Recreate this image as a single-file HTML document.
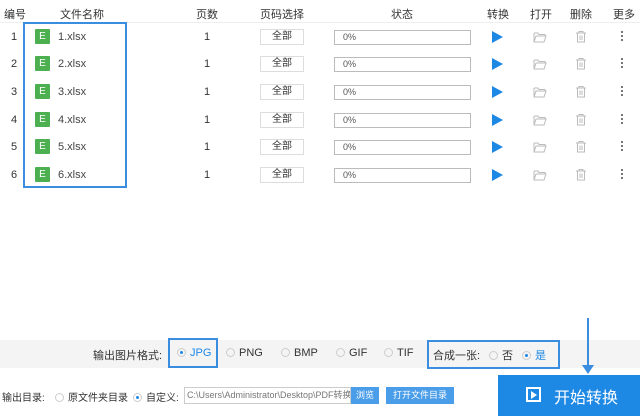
<!DOCTYPE html><html><head><meta charset="utf-8"><style>
*{margin:0;padding:0;box-sizing:border-box}
body{width:640px;height:420px;background:#fff;font-family:"Liberation Sans","Noto Sans CJK SC",sans-serif;font-size:11px;color:#333;position:relative;overflow:hidden}
.a{position:absolute;white-space:nowrap}
.h{top:6px;font-size:11px;color:#333}
.c{transform:translateX(-50%)}
.e{width:15px;height:15px;background:#4caf50;color:#fff;font-size:10px;text-align:center;line-height:15px;border-radius:1px}
.btn{width:44px;height:16px;border:1px solid #ddd;text-align:center;line-height:14px;font-size:10px;background:#fff}
.bar{width:137px;height:15px;border:1px solid #bbb;font-size:9px;padding-left:8px;line-height:13px;color:#555}
.play{width:0;height:0;border-left:11px solid #1e88e5;border-top:6px solid transparent;border-bottom:6px solid transparent}
.r{width:9px;height:9px;border:1px solid #ccc;border-radius:50%;display:inline-block;vertical-align:-1px;margin-right:4px;position:relative}
.r.on::after{content:"";position:absolute;left:2px;top:2px;width:3px;height:3px;border-radius:50%;background:#1e88e5}
</style></head><body>
<div class="a h c" style="left:15px">编号</div>
<div class="a h c" style="left:82px">文件名称</div>
<div class="a h c" style="left:207px">页数</div>
<div class="a h c" style="left:282px">页码选择</div>
<div class="a h c" style="left:402px">状态</div>
<div class="a h c" style="left:498px">转换</div>
<div class="a h c" style="left:541px">打开</div>
<div class="a h c" style="left:581px">删除</div>
<div class="a h c" style="left:624px">更多</div>
<div class="a" style="left:0;top:22px;width:640px;height:1px;background:#eee"></div>
<div id="rows"></div>
<script>
var ys=[37,64,92,120,147,175],h='';
ys.forEach(function(y,i){var n=i+1;
h+='<div class="a" style="left:11px;top:'+(y-6)+'px">'+n+'</div>'+
'<div class="a e" style="left:35px;top:'+(y-8)+'px">E</div>'+
'<div class="a" style="left:58px;top:'+(y-6)+'px;color:#444">'+n+'.xlsx</div>'+
'<div class="a" style="left:204px;top:'+(y-6)+'px">1</div>'+
'<div class="a btn" style="left:260px;top:'+(y-8)+'px">全部</div>'+
'<div class="a bar" style="left:334px;top:'+(y-7)+'px">0%</div>'+
'<div class="a play" style="left:492px;top:'+(y-6)+'px"></div>'+
'<svg class="a" style="left:533px;top:'+(y-6)+'px" width="14" height="12"><path d="M1 2h4l1 1.5h6v1.5M1 2v9h10l2-6H3l-2 6" fill="none" stroke="#bbb" stroke-width="1"/></svg>'+
'<svg class="a" style="left:575px;top:'+(y-7)+'px" width="12" height="13"><path d="M1 3h10M4 3V1.5h4V3M2.5 3v9h7V3M5 5.5v4.5M7 5.5v4.5" fill="none" stroke="#bbb"/></svg>'+
'<div class="a" style="left:621px;top:'+(y-6)+'px;width:2px;height:2px;background:#777;box-shadow:0 4px 0 #777,0 8px 0 #777"></div>';});
document.getElementById('rows').innerHTML=h;
</script>
<div class="a" style="left:23px;top:22px;width:104px;height:166px;border:2px solid #3b8de0"></div>
<div class="a" style="left:0;top:340px;width:640px;height:28px;background:#f4f4f4"></div>
<div class="a" style="left:93px;top:347px">输出图片格式:</div>
<div class="a" style="left:168px;top:338px;width:50px;height:30px;border:2px solid #3b8de0"></div>
<div class="a" style="left:177px;top:347px;color:#1e88e5"><span class="r on"></span>JPG</div>
<div class="a" style="left:226px;top:347px"><span class="r"></span>PNG</div>
<div class="a" style="left:281px;top:347px"><span class="r"></span>BMP</div>
<div class="a" style="left:336px;top:347px"><span class="r"></span>GIF</div>
<div class="a" style="left:384px;top:347px"><span class="r"></span>TIF</div>
<div class="a" style="left:427px;top:340px;width:133px;height:29px;border:2px solid #3b8de0"></div>
<div class="a" style="left:433px;top:347px">合成一张:</div>
<div class="a" style="left:489px;top:347px"><span class="r"></span>否</div>
<div class="a" style="left:522px;top:347px;color:#1e88e5"><span class="r on"></span>是</div>
<div class="a" style="left:587px;top:318px;width:2px;height:50px;background:#3b8de0"></div>
<div class="a" style="left:582px;top:365px;border-left:6px solid transparent;border-right:6px solid transparent;border-top:9px solid #3b8de0"></div>
<div class="a" style="left:2px;top:389px;font-size:10px">输出目录:</div>
<div class="a" style="left:55px;top:389px;font-size:10px"><span class="r"></span>原文件夹目录</div>
<div class="a" style="left:133px;top:389px;font-size:10px"><span class="r on"></span>自定义:</div>
<div class="a" style="left:184px;top:387px;width:167px;height:17px;border:1px solid #ccc;font-size:9px;color:#777;line-height:15px;padding-left:2px;overflow:hidden;white-space:nowrap">C:\Users\Administrator\Desktop\PDF转换</div>
<div class="a" style="left:351px;top:387px;width:28px;height:17px;background:#4a9de8;color:#fff;font-size:9px;text-align:center;line-height:17px">浏览</div>
<div class="a" style="left:386px;top:387px;width:68px;height:17px;background:#4a9de8;color:#fff;font-size:9px;text-align:center;line-height:17px">打开文件目录</div>
<div class="a" style="left:498px;top:375px;width:142px;height:41px;background:#1e88e5;color:#fff"></div>
<div class="a" style="left:526px;top:387px;width:15px;height:15px;border:2px solid #fff"><div style="position:absolute;left:3px;top:2px;border-left:6px solid #fff;border-top:4px solid transparent;border-bottom:4px solid transparent"></div></div>
<div class="a" style="left:554px;top:384px;color:#fff;font-size:16px">开始转换</div>
</body></html>
